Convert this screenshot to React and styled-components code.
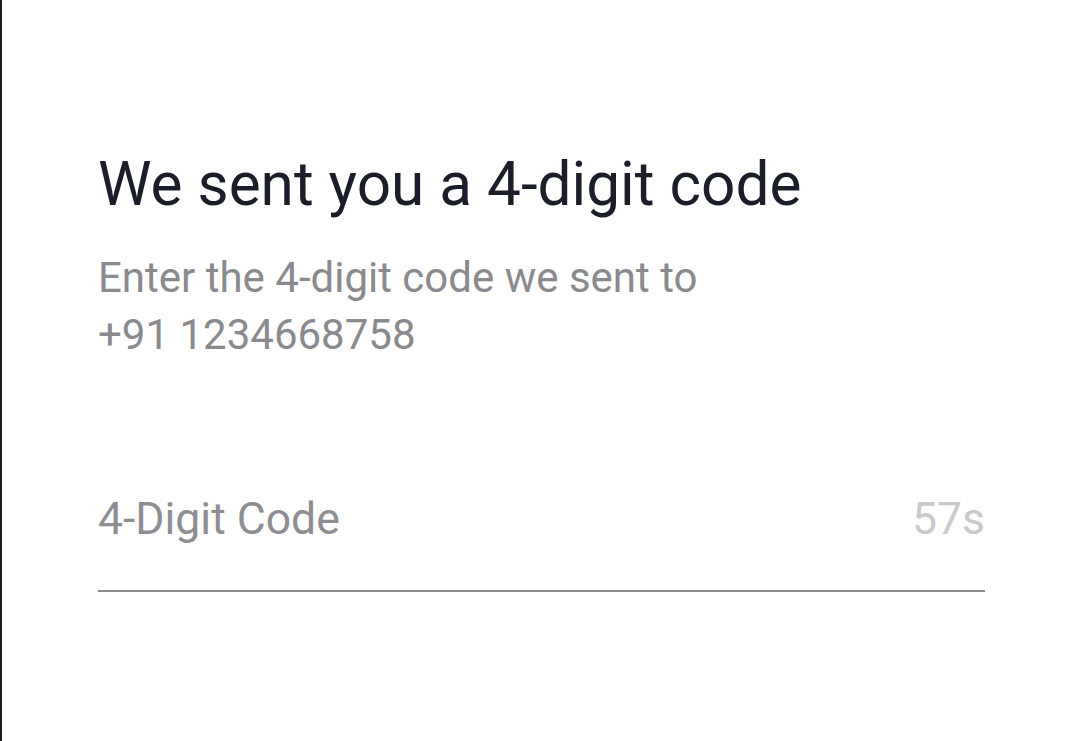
import React from 'react'
import styled, { createGlobalStyle } from 'styled-components'

const Global = createGlobalStyle`
  html, body {
    margin: 0;
    padding: 0;
    background: #ffffff;
  }
  * {
    box-sizing: border-box;
  }
`

const Screen = styled.div`
  height: 741px;
  background: #ffffff;
  border-left: 2px solid #1a1a1a;
  padding: 150px 95px 0 96px;
  font-family: Roboto, "Noto Sans", sans-serif;
  overflow: hidden;
`

const Title = styled.h1`
  margin: 0;
  font-size: 60.3px;
  line-height: 70px;
  font-weight: 400;
  color: #1b1e29;
`

const Subtitle = styled.p`
  margin: 29px 0 0;
  font-size: 42px;
  line-height: 57px;
  color: #8a8a8e;
  max-width: 640px;
`

const Field = styled.div`
  margin-top: 130px;
  display: flex;
  justify-content: space-between;
  align-items: center;
  padding-bottom: 45px;
  border-bottom: 2px solid #8c8c90;
`

const Label = styled.span`
  font-size: 44.5px;
  line-height: 52px;
  color: ${p => (p.muted ? '#c9c9cc' : '#8e8e92')};
`

const App = () => {
  return (
    <>
      <Global />
      <Screen>
        <Title>We sent you a 4-digit code</Title>
        <Subtitle>
          Enter the 4-digit code we sent to
          <br />
          +91 1234668758
        </Subtitle>
        <Field>
          <Label>4-Digit Code</Label>
          <Label muted>57s</Label>
        </Field>
      </Screen>
    </>
  )
}

export default App
